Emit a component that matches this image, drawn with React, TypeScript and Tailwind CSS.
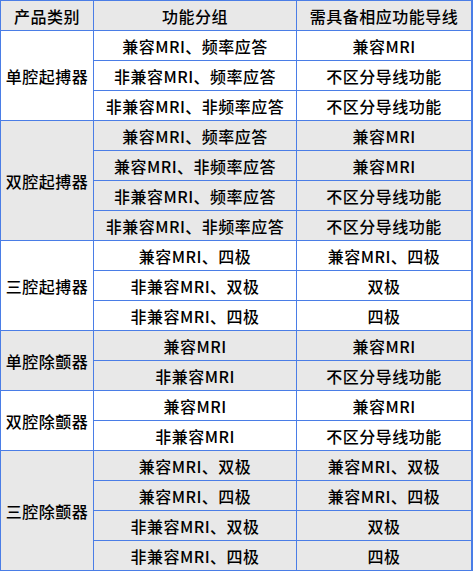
import React from "react";

type Group = { name: string; rows: [string, string][] };

const groups: Group[] = [
  {
    name: "单腔起搏器",
    rows: [
      ["兼容MRI、频率应答", "兼容MRI"],
      ["非兼容MRI、频率应答", "不区分导线功能"],
      ["非兼容MRI、非频率应答", "不区分导线功能"],
    ],
  },
  {
    name: "双腔起搏器",
    rows: [
      ["兼容MRI、频率应答", "兼容MRI"],
      ["兼容MRI、非频率应答", "兼容MRI"],
      ["非兼容MRI、频率应答", "不区分导线功能"],
      ["非兼容MRI、非频率应答", "不区分导线功能"],
    ],
  },
  {
    name: "三腔起搏器",
    rows: [
      ["兼容MRI、四极", "兼容MRI、四极"],
      ["非兼容MRI、双极", "双极"],
      ["非兼容MRI、四极", "四极"],
    ],
  },
  {
    name: "单腔除颤器",
    rows: [
      ["兼容MRI", "兼容MRI"],
      ["非兼容MRI", "不区分导线功能"],
    ],
  },
  {
    name: "双腔除颤器",
    rows: [
      ["兼容MRI", "兼容MRI"],
      ["非兼容MRI", "不区分导线功能"],
    ],
  },
  {
    name: "三腔除颤器",
    rows: [
      ["兼容MRI、双极", "兼容MRI、双极"],
      ["兼容MRI、四极", "兼容MRI、四极"],
      ["非兼容MRI、双极", "双极"],
      ["非兼容MRI、四极", "四极"],
    ],
  },
];

const spanClass: Record<number, string> = {
  2: "row-span-2",
  3: "row-span-3",
  4: "row-span-4",
};

export default function App() {
  return (
    <div
      className="w-[473px] bg-[#4a7de6] pt-px pl-px pr-[2px] pb-[2px] text-[16px] font-medium text-black tracking-[0.5px]"
      style={{ fontFamily: '"Noto Sans CJK SC", "Noto Sans", sans-serif' }}
    >
      <div className="grid grid-cols-[92px_202px_174px] auto-rows-[29px] gap-px">
        <div className="bg-[#e8e8e8] flex items-center justify-center">产品类别</div>
        <div className="bg-[#e8e8e8] flex items-center justify-center">功能分组</div>
        <div className="bg-[#e8e8e8] flex items-center justify-center">需具备相应功能导线</div>
        {groups.map((g, gi) => {
          const bg = gi % 2 === 0 ? "bg-white" : "bg-[#e8e8e8]";
          return (
            <React.Fragment key={g.name}>
              <div
                className={`${bg} ${spanClass[g.rows.length]} flex items-center justify-center`}
              >
                {g.name}
              </div>
              {g.rows.map((r, ri) => (
                <React.Fragment key={ri}>
                  <div className={`${bg} flex items-center justify-center`}>{r[0]}</div>
                  <div className={`${bg} flex items-center justify-center`}>{r[1]}</div>
                </React.Fragment>
              ))}
            </React.Fragment>
          );
        })}
      </div>
    </div>
  );
}
